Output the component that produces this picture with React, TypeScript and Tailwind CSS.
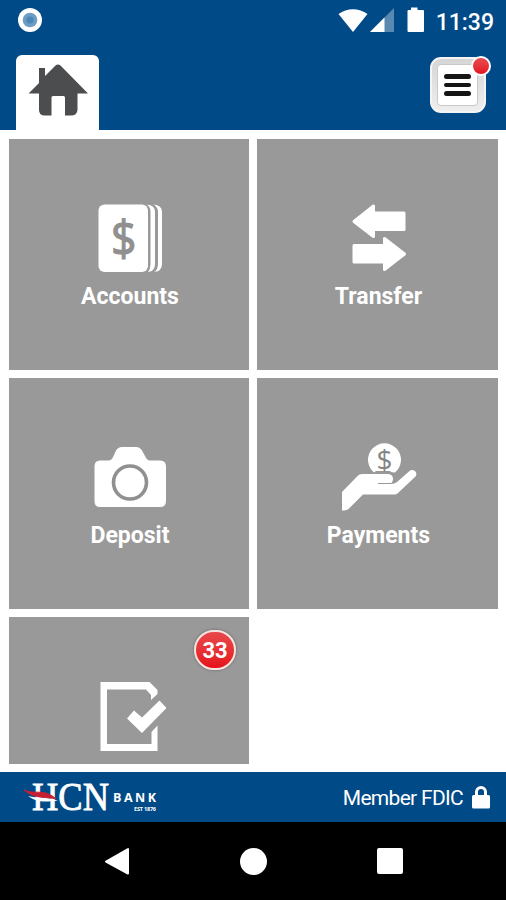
import type { ReactNode } from "react";

function Tile({ label, children }: { label?: string; children: ReactNode }) {
  return (
    <div className="flex flex-1 flex-col items-center overflow-hidden bg-[#999999] pt-[58px]">
      <svg viewBox="0 0 80 80" className="h-20 w-20 shrink-0 overflow-visible" fill="white">
        {children}
      </svg>
      {label && <span className="mt-[6px] ml-[2px] text-[23px] leading-7 font-bold text-white">{label}</span>}
    </div>
  );
}

function StatusBar() {
  return (
    <div className="flex h-10 items-center justify-between pr-[12px] pl-[18px]">
      <svg viewBox="0 0 24 24" className="h-6 w-6">
        <circle cx="12" cy="12" r="12" fill="white" />
        <circle cx="12" cy="12" r="7.3" fill="#6b9dc5" />
        <circle cx="12" cy="12" r="3.6" fill="#4a87b6" />
      </svg>
      <div className="flex items-center">
        <svg viewBox="0 0 90 28" className="mr-[8px] h-7 w-[90px]" fill="white">
          <path d="M.5 8C9 1.500 21 1.500 29.500 8L15 26Z" />
          <path d="M32 26 56 2V26Z" opacity=".35" />
          <path d="M32 26 46.500 11.500V26Z" />
          <path d="M73 1.500h6.500V4H85q1 0 1 1V25q0 1-1 1H70.500q-1 0-1-1V5q0-1 1-1h2.500Z" />
        </svg>
        <span className="mt-[5px] text-[23px] leading-7 font-medium text-white">11:39</span>
      </div>
    </div>
  );
}

function Header() {
  return (
    <header className="h-[130px] bg-[#004a87]">
      <StatusBar />
      <div className="flex h-[90px] items-start justify-between pt-[15px] pr-[20px] pl-[16px]">
        <div className="h-[75px] w-[83px] rounded-t-[6px] bg-white">
          <svg viewBox="0 0 83 75" className="h-[75px] w-[83px]" fill="#4c4d4f">
            <path d="M12.500 38.500 23 28V13H29V21L39.500 10.500Q42 8.500 44.500 10.500L72 38.500H61.500V55Q61 60.500 55 60.500H49V42.500Q49 41 47.500 41H37Q35.500 41 35.500 42.500V60.500H29Q23 60.500 23 55V38.500Z" />
          </svg>
        </div>
        <div className="relative mt-[2px] flex h-[56px] w-[56px] items-center justify-center rounded-[11px] border-2 border-[#f4f4f4] bg-linear-to-b from-[#d6d6d6] to-[#eeeeee]">
          <div className="mr-[1px] flex h-[42px] w-[41px] flex-col items-center justify-center gap-[4px] rounded-[4px] border border-[#c9c9c9] bg-white">
            <i className="h-[4.500px] w-[27px] rounded-full bg-[#151515]" />
            <i className="h-[4.500px] w-[27px] rounded-full bg-[#151515]" />
            <i className="h-[4.500px] w-[27px] rounded-full bg-[#151515]" />
          </div>
          <div className="absolute -top-[3px] -right-[7px] h-5 w-5 rounded-full border-2 border-white bg-linear-to-b from-[#e94850] to-[#e30f20]" />
        </div>
      </div>
    </header>
  );
}

export default function App() {
  return (
    <div className="flex h-[900px] w-[506px] flex-col overflow-hidden bg-white font-['Roboto',sans-serif]">
      <Header />
      <main className="grid h-[642px] grid-cols-[240px_241px] grid-rows-[231px_231px_147px] gap-2 pt-[9px] pl-[9px]">
        <Tile label="Accounts">
          <rect x="9.500" y="7.500" width="49.500" height="67.500" rx="6" />
          <path d="M58 7.500Q66 8 66 15V67Q66 74 59 75Q61.500 72 61.500 67V15Q61.500 10 58 7.500Z" />
          <path d="M64.500 7.500Q73 8 73 15V67Q73 74 65.500 75Q69 72 69 67V15Q69 10 64.500 7.500Z" />
          <text x="22" y="58.500" fontSize="49" textLength="25.500" lengthAdjust="spacingAndGlyphs" fill="#909090" stroke="#909090" strokeWidth="1.200" fontFamily="Open Sans, sans-serif">$</text>
        </Tile>
        <Tile label="Transfer">
          <path strokeLinejoin="round" stroke="white" strokeWidth="3" d="M16 24.500 35.500 9V16H66V32.500H35.500V39.500Z" />
          <path strokeLinejoin="round" stroke="white" strokeWidth="3" d="M66.500 57 46.500 41.500V48.500H16V65H46.500V72.500Z" />
        </Tile>
        <Tile label="Deposit">
          <path d="M11 24.500H20Q23 24 24.500 20L27 14.500Q29 11 33 11H47Q51 11 53 14.500L56 20Q58 24.500 61 24.500H71Q77 24.500 77 30.500V65Q77 71 71 71H11Q5.500 71 5.500 65V30.500Q5.500 24.500 11 24.500Z" />
          <circle cx="41" cy="46.500" r="16.500" fill="none" stroke="#909090" strokeWidth="3.600" />
        </Tile>
        <Tile label="Payments">
          <path d="M36 36.500A16.500 16.500 0 1 1 57 36.500Q54 36.500 51.500 35H38Z" />
          <text x="46.500" y="34" textAnchor="middle" fontSize="28" fill="#858585" fontFamily="Open Sans, sans-serif">$</text>
          <path d="M4 56 20 39.500Q21.500 38 24 38H49Q55 38 55 43Q55 45.500 53.500 47H40V48H53Q56.500 48 59 46L71.500 35Q74 33 77 35Q79.500 37.500 77.500 40.500L60 57Q58.500 58.500 56 58.500H25L11 72.500Q9 74.500 4 74.500Z" />
        </Tile>
        <div className="relative flex">
          <Tile>
            <path d="M11.500 7H60.500L68.500 15V19L62 25V20L57 14.500H18V69H62.500V57L68.500 50.500V76H11.500Z" />
            <path d="M38 43.500 45 35.500 53 42.500 70.500 25.500 77.500 33 53 58Z" />
          </Tile>
          <div className="absolute top-[13px] right-[13px] flex h-10 w-[42px] items-center justify-center rounded-full border-2 border-[#f7e3e0] bg-linear-to-b from-[#e8474c] to-[#e50f18] text-[22px] font-bold text-white shadow-[0_0_3px_#666]">33</div>
        </div>
      </main>
      <footer className="flex h-[50px] items-center justify-between bg-[#004a87] pr-[16px] pl-[24px]">
        <svg viewBox="0 0 136 50" className="h-[50px] w-[136px]" fill="white">
          <text x="8" y="38" fontSize="39" textLength="77" lengthAdjust="spacingAndGlyphs" stroke="white" strokeWidth=".8" fontFamily="Liberation Serif, serif">HCN</text>
          <path d="M4 24C14 27 23 24 34 29C23 29 15 32 4 24Z" />
          <path d="M0 18C10 23 21 16 32 27C22 24 12 28 0 18Z" fill="#c71f32" stroke="#c71f32" />
          <text x="89" y="30" fontSize="12.500" fontWeight="700" textLength="43" fontFamily="Open Sans, sans-serif">BANK</text>
          <text x="110" y="38.500" fontSize="5.500" fontWeight="700" textLength="22" fontFamily="Open Sans, sans-serif">EST 1876</text>
        </svg>
        <div className="flex items-center gap-[9px] text-[21px] text-white">
          <span className="mt-[3px] tracking-[-0.7px]">Member FDIC</span>
          <svg viewBox="0 0 18 24" className="h-6 w-[18px]" fill="white">
            <path d="M4.500 12V7a4.500 4.500 0 0 1 9 0v5" fill="none" stroke="white" strokeWidth="3" />
            <rect y="10" width="18" height="13.500" rx="1.500" />
          </svg>
        </div>
      </footer>
      <nav className="flex h-[78px] items-center justify-between bg-black pr-[103px] pl-[104px]">
        <svg viewBox="0 0 26 28" className="h-7 w-[26px]" fill="white" stroke="white" strokeWidth="2" strokeLinejoin="round">
          <path d="M2 14.500 24 2V26.500Z" />
        </svg>
        <div className="h-[27px] w-[27px] rounded-full bg-white" />
        <div className="h-[26px] w-[26px] rounded-[2px] bg-white" />
      </nav>
    </div>
  );
}
